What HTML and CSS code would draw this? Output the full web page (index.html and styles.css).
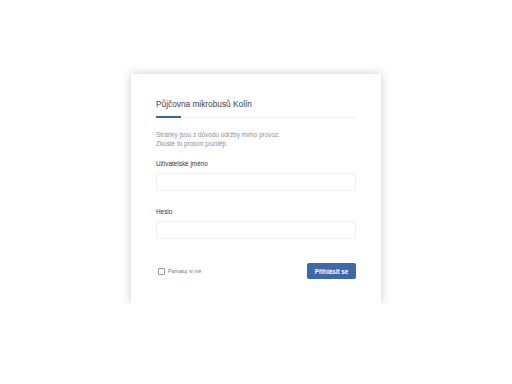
FILE: index.html
```html
<!DOCTYPE html>
<html>
<head>
    <title>Půjčovna mikrobusů Kolín</title>
    <link rel="stylesheet" href="styles.css">
</head>
<body>
    <div class="login-card">
        <h1 class="login-title">Půjčovna mikrobusů Kolín</h1>
        <p class="notice">Stránky jsou z důvodu údržby mimo provoz.<br>Zkuste to prosím později.</p>
        <form class="login-form">
            <label class="field-label" for="username">Uživatelské jméno</label>
            <input type="text" id="username" class="field-input">
            <label class="field-label" for="password">Heslo</label>
            <input type="password" id="password" class="field-input">
            <div class="form-footer">
                <label class="remember"><input type="checkbox"> Pamatuj si mě</label>
                <button type="button" class="login-btn">Přihlásit se</button>
            </div>
        </form>
    </div>
</body>
</html>
```

FILE: styles.css
```css
/* Simple centered login card */
body {
    font-family: "Liberation Sans", Arial, sans-serif;
    margin: 0;
    padding: 0;
    background-color: #fff;
}
.login-card {
    width: 250px;
    box-sizing: border-box;
    margin: 74px 0 0 131px;
    padding: 22px 25px 25px;
    background-color: #fff;
    box-shadow: 0 0 10px rgba(0, 0, 0, 0.2);
}
.login-title {
    position: relative;
    margin: 0;
    padding: 0 0 5px;
    font-size: 8.3px;
    line-height: 16px;
    font-weight: normal;
    color: #3b4252;
    border-bottom: 1px solid #eef0f3;
}
.login-title::after {
    content: "";
    position: absolute;
    left: 0;
    bottom: -1px;
    width: 25px;
    height: 2px;
    background-color: #3c64a8;
}
.notice {
    margin: 12px 0 0;
    font-size: 6.4px;
    line-height: 9px;
    color: #8b919b;
}
.login-form {
    display: flex;
    flex-direction: column;
}
.field-label {
    margin-top: 11px;
    font-size: 6.4px;
    line-height: 9px;
    color: #333;
}
.field-input {
    margin: 5px 0;
    height: 18px;
    box-sizing: border-box;
    border: 1px solid #eceef1;
    border-radius: 3px;
    background: #fff;
}
.form-footer {
    display: flex;
    justify-content: space-between;
    align-items: center;
    margin-top: 19px;
}
.remember {
    display: flex;
    align-items: center;
    gap: 3px;
    margin-left: 2px;
    font-size: 5.3px;
    color: #777;
}
.remember input {
    appearance: none;
    margin: 0;
    width: 7px;
    height: 7px;
    border: 1px solid #999;
    border-radius: 1px;
    background: #fff;
}
.login-btn {
    width: 49px;
    height: 16px;
    padding: 0;
    border: none;
    border-radius: 2px;
    background-color: #3c68ae;
    color: #fff;
    font-family: "Liberation Sans", Arial, sans-serif;
    font-size: 6.3px;
    font-weight: bold;
}
```
